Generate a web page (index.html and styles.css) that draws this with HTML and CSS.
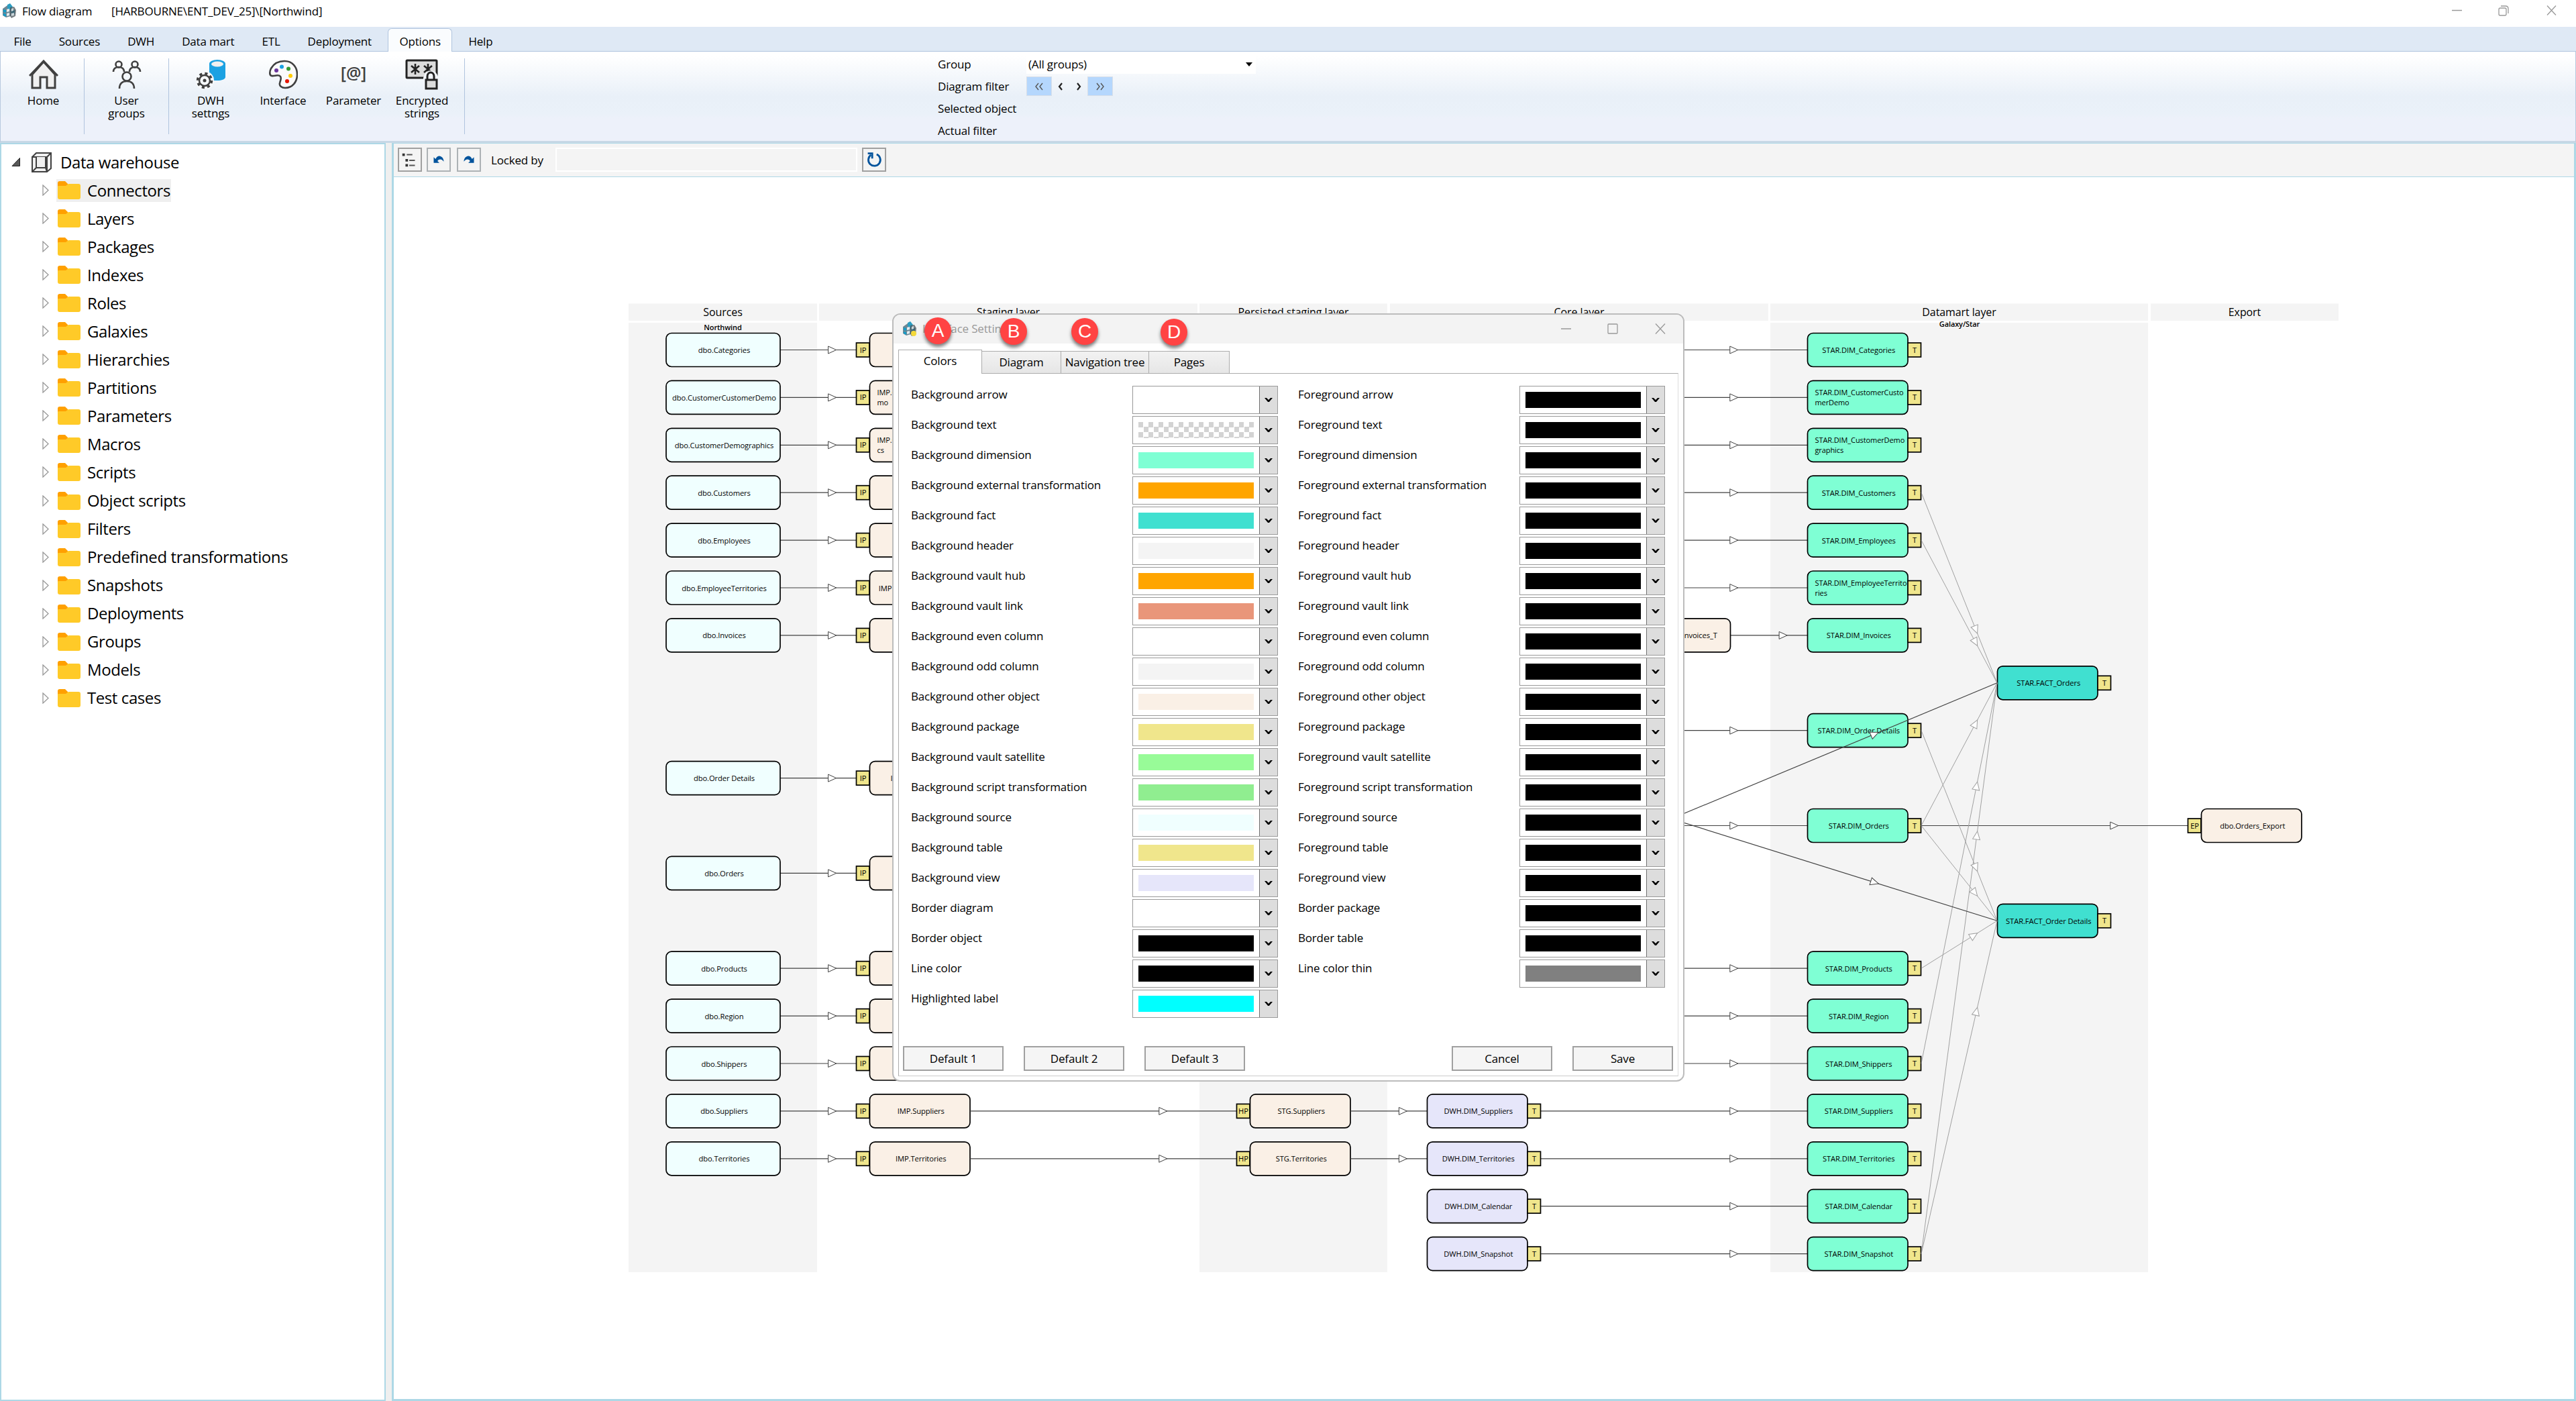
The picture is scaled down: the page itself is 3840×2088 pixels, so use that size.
FILE: index.html
```
<!DOCTYPE html>
<html lang="en">
<head>
  <meta charset="UTF-8">
  <title>Flow diagram</title>
  <link rel="stylesheet" href="styles.css">
</head>
<body>
  <svg class="sprites">
    <symbol id="appIcon" viewBox="0 0 24 24">
      <path d="M2 9l7-5 5 3v13l-7 2-5-3z" fill="#6d8794"/>
      <path d="M9 3l4-2 4 5-3 5-5-2z" fill="#2b9cc0"/>
      <path d="M3 10l4 1v4l-4-1zM3 16l4 1v4l-4-2zM14 12l6-1v6l-5 1z" fill="#149cc8"/>
      <path d="M8 10l4-1v4l-4 1zM8 16l4-1v4l-4 1z" fill="#e4ecef"/>
      <path d="M13 7l6-1 3 5-1 9-6 3-2-3z" fill="#4a5358" opacity=".75"/>
      <path d="M15 9l3-1v4l-3 1zM15 16l4-1v4l-4 1z" fill="#c9d5da"/>
    </symbol>
    <symbol id="folder" viewBox="0 0 34 27">
      <path d="M0 3a3 3 0 0 1 3-3h8l4 4v6H0z" fill="#ffa000"/>
      <path d="M0 8q0-1 1-1h11l4-3h15a3 3 0 0 1 3 3v17a3 3 0 0 1-3 3H3a3 3 0 0 1-3-3z" fill="#ffca28"/>
    </symbol>
    <symbol id="chevron" viewBox="0 0 12 8">
      <path d="M0 1h3l3 3 3-3h3L7 7H5z" fill="#000"/>
    </symbol>
  </svg>

  <header class="titlebar">
    <svg class="app-icon"><use href="#appIcon"/></svg>
    <span class="title-name">Flow diagram</span>
    <span>[HARBOURNE\ENT_DEV_25]\[Northwind]</span>
    <svg class="window-buttons" viewBox="0 0 156 16">
      <path d="M0 7.500h15M142 .5l13 14M155 .5l-13 14" />
      <rect x="70" y="4" width="11" height="11" rx="2"/>
      <path d="M73 1h7q4 0 4 4v7"/>
    </svg>
  </header>

  <nav class="menu">
    <span>File</span>
    <span>Sources</span>
    <span>DWH</span>
    <span>Data mart</span>
    <span>ETL</span>
    <span>Deployment</span>
    <span class="active">Options</span>
    <span>Help</span>
  </nav>

  <section class="ribbon">
    <div class="ribbon-item home">
      <svg viewBox="0 0 44 44" fill="#f0f0f0" stroke="#404040" stroke-width="3">
        <path d="M5 22v20h12V26h10v16h12V22L22 3z"/><path d="M1 24L22 2l21 22" fill="none"/>
      </svg>
      Home
    </div>
    <div class="ribbon-item users">
      <svg viewBox="0 0 44 44" fill="none" stroke="#404040" stroke-width="2.600">
        <circle cx="10" cy="7" r="4.500"/><path d="M2 18c0-5 4-7 8-7s8 2 8 7"/>
        <circle cx="34" cy="7" r="4.500"/><path d="M26 18c0-5 4-7 8-7s8 2 8 7"/>
        <circle cx="22" cy="25" r="6.500"/><path d="M11 43c0-8 5-11 11-11s11 3 11 11"/>
      </svg>
      User<br>groups
    </div>
    <div class="ribbon-item dwh">
      <svg viewBox="0 0 44 44">
        <path d="M20 6v22l7 3h5c6 0 12-2 12-5V6z" fill="#1ba1e2"/>
        <ellipse cx="32" cy="6" rx="12" ry="6" fill="#1ba1e2"/>
        <ellipse cx="32" cy="6.500" rx="9" ry="4" fill="#f0f0f0"/>
        <circle cx="13" cy="31" r="14" fill="#f6f9fc"/>
        <circle cx="13" cy="31" r="10.500" fill="none" stroke="#404040" stroke-width="3.500" stroke-dasharray="4.100 4.150"/>
        <circle cx="13" cy="31" r="8" fill="none" stroke="#404040" stroke-width="2.500"/>
        <circle cx="13" cy="31" r="2.500" fill="#404040"/>
      </svg>
      DWH<br>settngs
    </div>
    <div class="ribbon-item interface">
      <svg viewBox="0 0 44 44">
        <path d="M24 2c12 0 19 9 19 20S36 42 25 42c-5 0-9-3-8-7 1-5 3-7 1-10-3-4-9 0-13-1-4-1-3-7-1-11C8 6 15 2 24 2z" fill="#fafafa" stroke="#404040" stroke-width="2.600"/>
        <circle cx="20" cy="10.500" r="3" fill="#1ba1e2"/>
        <circle cx="12" cy="16" r="3" fill="#6a359c"/>
        <circle cx="30" cy="13.500" r="3" fill="#339933"/>
        <circle cx="33" cy="24" r="3" fill="#ffcc00"/>
        <circle cx="28" cy="32" r="3" fill="#e51400"/>
      </svg>
      Interface
    </div>
    <div class="ribbon-item parameter">
      <div class="param-icon">[@]</div>
      Parameter
    </div>
    <div class="ribbon-item encrypted">
      <svg viewBox="0 0 50 46">
        <rect x="2" y="2" width="45" height="26" rx="1" fill="#dcdcdc" stroke="#222" stroke-width="3"/>
        <path d="M15 7v16M9 10l12 10M21 10L9 20M34 7v16M28 10l12 10M40 10L28 20" stroke="#222" stroke-width="2.600"/>
        <path d="M27 46V28q3-11 11-11t12 11v18z" fill="#f2f5fa"/>
        <path d="M33 32v-6c0-8 10-8 10 0v6" fill="none" stroke="#222" stroke-width="3"/>
        <rect x="31" y="31" width="16" height="13" fill="#dcdcdc" stroke="#222" stroke-width="3"/>
      </svg>
      Encrypted<br>strings
    </div>
    <div class="ribbon-filter">
      <div>Group</div>
      <div class="group-select">(All groups)
        <svg viewBox="0 0 10 6"><path d="M0 0h10L5 6z"/></svg>
      </div>
      <div>Diagram filter</div>
      <div class="pager">
        <b class="on"><svg viewBox="0 0 14 12"><path d="M6 1L2 6l4 5M12 1L8 6l4 5"/></svg></b>
        <b><svg class="dark" viewBox="0 0 14 12"><path d="M9 1L5 6l4 5"/></svg></b>
        <b class="next"><svg class="dark" viewBox="0 0 14 12"><path d="M5 1l4 5-4 5"/></svg></b>
        <b class="on"><svg viewBox="0 0 14 12"><path d="M2 1l4 5-4 5M8 1l4 5-4 5"/></svg></b>
      </div>
      <div>Selected object</div><div></div>
      <div>Actual filter</div><div></div>
    </div>
  </section>

  <div class="workspace">
    <aside class="tree">
      <div class="tree-root">
        <svg viewBox="0 0 13 13"><path d="M1 12.500L12.500 .5v12z" fill="#595959" stroke="#222"/></svg>
        <svg class="cube" viewBox="0 0 30 30" fill="#f0f0f0" stroke="#404040" stroke-width="2">
          <path d="M1 7h22v22H1zM1 7l6-6h22l-6 6zM23 7l6-6v23l-6 5z"/>
          <path d="M7 7v16h14V7M7 23l-6 6M21 23l2 6"/>
        </svg>
        Data warehouse
      </div>
      <div id="treeItems"></div>
    </aside>

    <main class="main">
      <div class="toolbar">
        <button><svg viewBox="0 0 32 32"><path d="M4 6h4v4H4zM9 15h4v4H9zM9 23h4v4H9z" fill="#333"/><path d="M11 8h9M15 17h9M15 25h9" stroke="#555" stroke-width="2"/></svg></button>
        <button class="undo"><svg viewBox="0 0 32 32"><path d="M8 12v9h9l-3-3c3-4 7-3 10 1 0-8-9-13-13-4z" fill="#00539c"/></svg></button>
        <button class="redo"><svg viewBox="0 0 32 32"><path d="M24 12v9h-9l3-3c-3-4-7-3-10 1 0-8 9-13 13-4z" fill="#00539c"/></svg></button>
        <span class="locked">Locked by</span>
        <div class="locked-field"></div>
        <button><svg viewBox="0 0 32 32"><path d="M20 7.500a9.500 9.500 0 1 1-9 1" fill="none" stroke="#00539c" stroke-width="3"/><path d="M6 6h7v8" fill="none" stroke="#00539c" stroke-width="3"/></svg></button>
      </div>
      <svg id="diagram" viewBox="587 264 3250 1820"></svg>
    </main>
  </div>

  <div class="dialog">
    <div class="dialog-title">
      <svg class="app-icon"><use href="#appIcon"/><circle cx="18" cy="19" r="4" fill="#f4d93a"/></svg>
      <span>Interface Settings</span>
      <svg class="window-buttons" viewBox="0 0 156 16">
        <path d="M0 8h15M141 .5l14 15M155 .5l-14 15"/>
        <rect x="70" y="1" width="14" height="14" rx="1"/>
      </svg>
    </div>
    <div class="tabs">
      <div class="tab active">Colors</div>
      <div class="tab">Diagram</div>
      <div class="tab nav">Navigation tree</div>
      <div class="tab pages">Pages</div>
    </div>
    <div class="panel">
      <div class="color-columns">
        <div id="leftColors"></div>
        <div id="rightColors"></div>
      </div>
      <div class="dialog-buttons">
        <button>Default 1</button>
        <button>Default 2</button>
        <button>Default 3</button>
        <button class="cancel">Cancel</button>
        <button>Save</button>
      </div>
    </div>
    <div class="badge badge-a">A</div>
    <div class="badge badge-b">B</div>
    <div class="badge badge-c">C</div>
    <div class="badge badge-d">D</div>
  </div>

  <script src="app.js"></script>
</body>
</html>
```
FILE: styles.css
```
* {
  box-sizing: border-box;
}

body {
  margin: 0;
  width: 3840px;
  height: 2088px;
  overflow: hidden;
  display: flex;
  flex-direction: column;
  position: relative;
  background: #fff;
  color: #000;
  font-family: "Open Sans", "Noto Sans", sans-serif;
  font-size: 17px;
  letter-spacing: -0.18px;
}

svg {
  display: block;
  flex: none;
}

.sprites {
  display: none;
}

/* title bar and menu */
.titlebar {
  height: 40px;
  flex: none;
  display: flex;
  align-items: center;
  padding: 0 29px 8px 2px;
}

.app-icon {
  width: 24px;
  height: 24px;
  margin-right: 7px;
}

.title-name {
  width: 133px;
}

.window-buttons {
  width: 156px;
  height: 16px;
  margin-left: auto;
  fill: none;
  stroke: #999;
  stroke-width: 1.3;
}

.menu {
  height: 37px;
  flex: none;
  display: flex;
  align-items: flex-end;
  background: #dfe9f5;
  border-bottom: 1px solid #b0c4de;
}

.menu span {
  height: 34px;
  line-height: 39px;
  padding: 0 20.5px;
}

.menu .active {
  margin: 0 4px;
  padding: 0 16px;
  line-height: 37px;
  margin-bottom: -1px;
  height: 35px;
  background: #fafcfe;
  border: 1px solid #b0c4de;
  border-bottom: none;
  border-radius: 6px 6px 0 0;
}

/* ribbon */
.ribbon {
  height: 136px;
  flex: none;
  display: flex;
  background: linear-gradient(#fff 5%, #e9f0f8 50%, #eaf1f9 70%, #edf1fa 75%);
  border: 1px solid #b8c9de;
  border-top: none;
  border-bottom: 3px solid #c8d8e6;
  padding: 10px 0 10px;
}

.ribbon-item {
  display: flex;
  flex-direction: column;
  align-items: center;
  text-align: center;
  line-height: 19px;
}

.ribbon-item svg {
  width: 44px;
  height: 44px;
  margin: 2px 0 7px;
}

.home,
.users,
.encrypted {
  border-right: 1px solid #b0c4de;
}

.home {
  width: 125px;
  padding-left: 3px;
}

.users {
  width: 126px;
}

.dwh {
  width: 124px;
}

.interface {
  width: 92px;
}

.parameter {
  width: 118px;
}

.encrypted {
  width: 107px;
  padding-right: 20px;
}

.ribbon-item.encrypted svg {
  width: 50px;
  height: 46px;
  margin: 1px 0 6px;
}

.param-icon {
  height: 44px;
  margin: 2px 0 7px;
  font-size: 25px;
  line-height: 39px;
  color: #404040;
  font-weight: 600;
}

.ribbon-filter {
  margin: -8px 0 0 705px;
  display: grid;
  grid-template-columns: 132px 342px;
  grid-auto-rows: 33px;
  align-items: center;
  height: 132px;
}

.group-select {
  height: 28px;
  line-height: 26px;
  padding: 0 5px 0 3px;
  display: flex;
  justify-content: space-between;
  align-items: center;
  background: #fff;
}

.group-select svg {
  width: 10px;
  height: 6px;
}

.pager {
  display: flex;
  height: 29px;
}

.pager b {
  width: 26px;
  display: flex;
  align-items: center;
  justify-content: center;
}

.pager .next {
  width: 27px;
}

.pager svg {
  width: 14px;
  height: 12px;
  fill: none;
  stroke: #555;
  stroke-width: 1.4;
}

.pager .dark {
  stroke: #222;
  stroke-width: 2.2;
}

.pager .on {
  width: 38px;
  background: #b5d7fd;
  border: 1px solid #d8dfe8;
}

/* tree */
.workspace {
  flex: 1;
  display: flex;
  gap: 9px;
  background: #efefef;
}

.tree {
  width: 575px;
  border: 2px solid #add8e6;
  background: #fff;
  font-size: 24px;
  letter-spacing: -0.42px;
  padding-top: 6px;
}

.tree-root {
  display: flex;
  align-items: center;
  height: 42px;
  padding: 0 0 1px 15px;
}

.tree-root svg {
  width: 13px;
  height: 13px;
}

.tree-root .cube {
  width: 30px;
  height: 30px;
  margin: 0 13px 0 17px;
}

.tree-item {
  display: flex;
  align-items: center;
  height: 42.06px;
  padding: 0 0 1px 61px;
}

.tree-item .expand {
  width: 10px;
  height: 17px;
  margin-right: 11px;
}

.tree-item .folder {
  width: 34px;
  height: 27px;
  margin-right: 10px;
}

.tree-label {
  display: flex;
  align-items: center;
  height: 34px;
  line-height: 32px;
  padding: 0 1px 0 2px;
}

.tree-item.selected .tree-label {
  background: #efefef;
}

/* main area */
.main {
  flex: 1;
  display: flex;
  flex-direction: column;
  border: 3px solid #add8e6;
  border-top-width: 1px;
  background: #fff;
}

.toolbar {
  height: 50px;
  display: flex;
  align-items: center;
  padding: 0 6px 1px;
  background: #f4f4f4;
  border-bottom: 1px solid #add8e6;
}

.toolbar button {
  width: 36px;
  height: 36px;
  padding: 1px;
  background: #f4f4f4;
  border: 2px solid #a0a0a0;
}

.toolbar .undo {
  margin: 0 9px 0 7px;
}

.toolbar .undo,
.toolbar .redo {
  border-color: #adb2b5;
}

.locked {
  width: 96px;
  margin-left: 15px;
}

.locked-field {
  width: 450px;
  height: 36px;
  margin-right: 7px;
  border: 2px solid #fff;
}

#diagram {
  width: 3250px;
  height: 1820px;
  letter-spacing: -0.1px;
}

#diagram .column {
  fill: #f4f4f4;
}

#diagram text {
  font-size: 11.2px;
  text-anchor: middle;
}

#diagram .column-title {
  font-size: 16px;
}

#diagram .column-sub {
  font-size: 11px;
  font-weight: 600;
}

#diagram .wrapped {
  font-size: 11px;
  text-anchor: start;
}

#diagram .box {
  stroke: #000;
  stroke-width: 1.7;
}

#diagram .line {
  stroke: #404040;
  stroke-width: 1.2;
}

#diagram .head {
  fill: #fff;
  stroke: #404040;
}

#diagram .thin {
  stroke: #a0a0a0;
  stroke-width: 1;
}

.source { fill: #f0ffff; }
.other { fill: #faf0e6; }
.view { fill: #e6e6fa; }
.dim { fill: #7fffd4; }
.fact { fill: #40e0d0; }
.tag { fill: #f0e68c; }

/* settings dialog */
.dialog {
  position: absolute;
  left: 1330px;
  top: 467px;
  width: 1181px;
  height: 1145px;
  border: 2px solid #bcbcbc;
  border-radius: 12px;
  background: #fff;
}

.dialog-title {
  display: flex;
  align-items: center;
  height: 43px;
  padding: 0 26px 2px 12px;
  background: #f3f3f3;
  border-radius: 10px 10px 0 0;
  color: #999;
}

.tabs {
  display: flex;
  align-items: flex-end;
  height: 44px;
  padding-left: 7px;
}

.tab {
  width: 118px;
  height: 33px;
  line-height: 32px;
  text-align: center;
  background: linear-gradient(#f2f2f2, #e6e6e6);
  border: 1px solid #acacac;
  border-width: 1px 1px 0 0;
}

.tab.active {
  width: 125px;
  height: 36px;
  margin-bottom: -1px;
  background: #fff;
  border-left-width: 1px;
}

.tab.nav {
  width: 131px;
}

.tab.pages {
  width: 120px;
}

.panel {
  width: 1163px;
  height: 1048px;
  margin-left: 7px;
  border: 1px solid #acacac;
  border-right-color: #ddd;
  border-bottom-color: #ccc;
  padding: 18px 7px 0 18px;
  display: flex;
  flex-direction: column;
}

.color-columns {
  display: flex;
  gap: 30px;
  height: 984px;
}

.color-row {
  display: flex;
  justify-content: space-between;
  width: 547px;
  height: 45px;
  line-height: 26px;
}

.combo {
  display: flex;
  width: 217px;
  height: 42px;
  border: 1px solid #999;
}

.swatch {
  width: 172px;
  height: 24px;
  margin: 8px 8px 0;
}

.swatch.none {
  background: repeating-conic-gradient(#fff 0 25%, #d3d3d3 0 50%) 0 0 / 15px 15px;
}

.drop {
  width: 27px;
  background: #ddd;
  border-left: 1px solid #707070;
  display: flex;
  align-items: center;
  justify-content: center;
}

.drop svg {
  width: 12px;
  height: 8px;
}

.dialog-buttons {
  display: flex;
  gap: 30px;
  margin-left: -12px;
}

.dialog-buttons button {
  width: 150px;
  height: 37px;
  padding: 0 0 1px;
  font: inherit;
  letter-spacing: inherit;
  background: #f5f5f5;
  border: 2px solid #a0a0a0;
}

.dialog-buttons .cancel {
  margin-left: 278px;
}

.badge {
  position: absolute;
  top: 4px;
  width: 40px;
  height: 40px;
  border-radius: 50%;
  background: #ff4343;
  color: #fff;
  font: 28px/40px "Liberation Sans", sans-serif;
  text-align: center;
  box-shadow: 0 4px 5px rgba(0, 0, 0, 0.5);
}

.badge-a { left: 46px; }
.badge-b { left: 159px; top: 5px; }
.badge-c { left: 265px; top: 5px; }
.badge-d { left: 398px; top: 6px; }
```
FILE: app.js
```
const treeItems = ["Connectors", "Layers", "Packages", "Indexes", "Roles", "Galaxies",
  "Hierarchies", "Partitions", "Parameters", "Macros", "Scripts", "Object scripts", "Filters",
  "Predefined transformations", "Snapshots", "Deployments", "Groups", "Models", "Test cases"];

document.getElementById("treeItems").innerHTML = treeItems.map((name, i) => `
  <div class="tree-item ${i === 0 ? "selected" : ""}">
    <svg class="expand" viewBox="0 0 10 17"><path d="M1 1l8 7.500-8 7.500z" fill="#fff" stroke="#999" stroke-width="1.300"/></svg>
    <div class="tree-label"><svg class="folder"><use href="#folder"/></svg>${name}</div>
  </div>`).join("");

// color rows of the dialog
const leftColors = [
  ["Background arrow", "#fff"], ["Background text", "none"], ["Background dimension", "#7fffd4"],
  ["Background external transformation", "#ffa500"], ["Background fact", "#40e0d0"],
  ["Background header", "#f4f4f4"], ["Background vault hub", "#ffa500"],
  ["Background vault link", "#e9967a"], ["Background even column", "#fff"],
  ["Background odd column", "#f4f4f4"], ["Background other object", "#faf0e6"],
  ["Background package", "#f0e68c"], ["Background vault satellite", "#98fb98"],
  ["Background script transformation", "#90ee90"], ["Background source", "#f0ffff"],
  ["Background table", "#f0e68c"], ["Background view", "#e6e6fa"], ["Border diagram", "#fff"],
  ["Border object", "#000"], ["Line color", "#000"], ["Highlighted label", "#0ff"]
];
const rightColors = ["arrow", "text", "dimension", "external transformation", "fact", "header",
  "vault hub", "vault link", "even column", "odd column", "other object", "package",
  "vault satellite", "script transformation", "source", "table", "view"]
  .map(n => ["Foreground " + n, "#000"])
  .concat([["Border package", "#000"], ["Border table", "#000"], ["Line color thin", "#808080"]]);

function colorRows(rows) {
  return rows.map(([label, color]) => `
    <div class="color-row">
      <span>${label}</span>
      <div class="combo">
        ${color === "none" ? `<div class="swatch none"></div>` : `<div class="swatch" style="background:${color}"></div>`}
        <div class="drop"><svg><use href="#chevron"/></svg></div>
      </div>
    </div>`).join("");
}
document.getElementById("leftColors").innerHTML = colorRows(leftColors);
document.getElementById("rightColors").innerHTML = colorRows(rightColors);

// diagram
let out = "";
const rowY = r => 521.5 + r * 70.9;

function column(x1, x2, title, filled) {
  out += `<rect class="column" x="${x1}" y="452.5" width="${x2 - x1}" height="25.5"/>`;
  if (filled) out += `<rect class="column" x="${x1}" y="481" width="${x2 - x1}" height="1415"/>`;
  out += `<text class="column-title" x="${(x1 + x2) / 2}" y="471">${title}</text>`;
}

function box(x, r, w, type, label) {
  const y = rowY(r);
  out += `<rect class="box ${type}" x="${x}" y="${y - 25}" width="${w}" height="50" rx="8"/>`;
  const lines = label.split("|");
  if (lines.length === 1) {
    out += `<text x="${x + w / 2 + 1.5}" y="${y + 4.5}">${label}</text>`;
  } else {
    out += `<text class="wrapped" x="${x + 11}" y="${y - 3.5}">${lines[0]}</text>`;
    out += `<text class="wrapped" x="${x + 11}" y="${y + 12}">${lines[1]}</text>`;
  }
}

function tag(x, r, label) {
  const y = rowY(r);
  out += `<rect class="box tag" x="${x}" y="${y - 10.5}" width="19.5" height="21"/>`;
  out += `<text x="${x + 10}" y="${y + 4}">${label}</text>`;
}

// arrow head sits at 74% of the line
function link(x1, r1, x2, r2, thin) {
  const y1 = rowY(r1), y2 = rowY(r2);
  const tx = x1 + (x2 - x1) * 0.74, ty = y1 + (y2 - y1) * 0.74;
  const angle = Math.atan2(y2 - y1, x2 - x1) * 180 / Math.PI;
  const cls = thin ? "thin" : "";
  out += `<line class="line ${cls}" x1="${x1}" y1="${y1}" x2="${x2}" y2="${y2}"/>`;
  out += `<path class="head ${cls}" d="M-12 -5.5L0 0L-12 5.5z" transform="translate(${tx} ${ty}) rotate(${angle})"/>`;
}

column(937, 1218, "Sources", true);
column(1221, 1785, "Staging layer", false);
column(1788, 2068, "Persisted staging layer", true);
column(2072, 2636, "Core layer", false);
column(2639, 3202, "Datamart layer", true);
column(3206, 3486, "Export", false);
out += `<text class="column-sub" x="1077.5" y="492">Northwind</text>`;
out += `<text class="column-sub" x="2921" y="486.5">Galaxy/Star</text>`;

const tables = [
  ["Categories", 0], ["CustomerCustomerDemo", 1, "CustomerCustomerDe|mo", "CustomerCusto|merDemo"],
  ["CustomerDemographics", 2, "CustomerDemographi|cs", "CustomerDemo|graphics"],
  ["Customers", 3], ["Employees", 4],
  ["EmployeeTerritories", 5, "EmployeeTerritories", "EmployeeTerrito|ries"],
  ["Invoices", 6], ["Order Details", 9], ["Orders", 11], ["Products", 13], ["Region", 14],
  ["Shippers", 15], ["Suppliers", 16], ["Territories", 17]
];
const dimRows = { "Order Details": 8, "Orders": 10 };

tables.forEach(([name, r, imp, dim]) => {
  link(1163, r, 1276, r);
  box(993, r, 170, "source", "dbo." + name);
  tag(1276.5, r, "IP");
  box(1296.5, r, 149.5, "other", "IMP." + (imp || name));
  const dr = dimRows[name] || r;
  link(r === 6 ? 2579 : 2297, dr, 2694, dr);
  box(2694.5, dr, 149.5, "dim", "STAR.DIM_" + (dim || name));
  tag(2844, dr, "T");
});

["Suppliers", "Territories"].forEach((name, i) => {
  const r = 16 + i;
  link(1446, r, 1843, r);
  tag(1843.5, r, "HP");
  box(1863.5, r, 149.5, "other", "STG." + name);
  link(2013, r, 2127, r);
});
["Suppliers", "Territories", "Calendar", "Snapshot"].forEach((name, i) => {
  box(2127.5, 16 + i, 149.5, "view", "DWH.DIM_" + name);
  tag(2277, 16 + i, "T");
});
["Calendar", "Snapshot"].forEach((name, i) => {
  link(2297, 18 + i, 2694, 18 + i);
  box(2694.5, 18 + i, 149.5, "dim", "STAR.DIM_" + name);
  tag(2844, 18 + i, "T");
});
box(2430, 6, 149.5, "other", "DWH.DIM_Invoices_T");

box(2977.5, 7, 149.5, "fact", "STAR.FACT_Orders");
tag(3127, 7, "T");
box(2977.5, 12, 149.5, "fact", "STAR.FACT_Order Details");
tag(3127, 12, "T");

link(2864, 10, 3261, 10);
tag(3261.5, 10, "EP");
box(3281.5, 10, 149.5, "other", "dbo.Orders_Export");

// dimension row -> fact row
[[3, 7], [4, 7], [10, 7], [15, 7], [19, 7], [8, 12], [10, 12], [13, 12], [19, 12]]
  .forEach(([from, to]) => link(2864, from, 2977, to, true));
link(2297, 11, 2977, 7);
link(2297, 9, 2977, 12);

document.getElementById("diagram").innerHTML = out;
```
